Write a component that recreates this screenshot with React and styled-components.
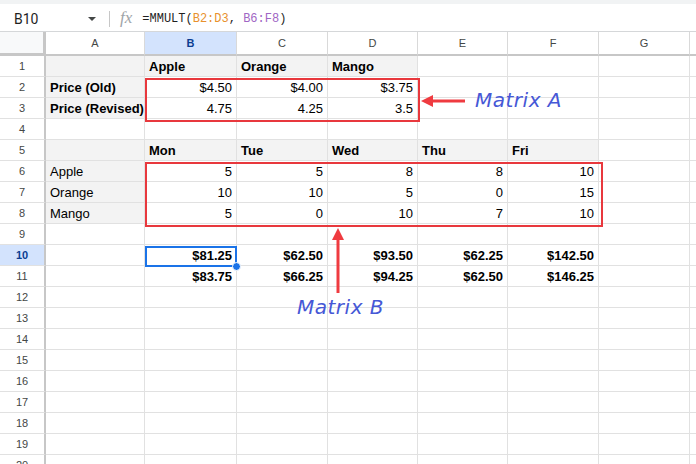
import React from 'react';
import styled, { createGlobalStyle } from 'styled-components';

const GlobalStyle = createGlobalStyle`
  html, body {
    margin: 0;
    padding: 0;
    background: #ffffff;
    font-family: 'Liberation Sans', Arial, sans-serif;
  }
`;

const Page = styled.div`
  position: relative;
  width: 696px;
  height: 464px;
  overflow: hidden;
  background: #ffffff;
`;

const TopStrip = styled.div`
  height: 4px;
  background: #f1f3f4;
`;

const FormulaBar = styled.div`
  display: flex;
  align-items: center;
  height: 28px;
  padding-top: 3px;
  box-sizing: border-box;
  border-bottom: 1px solid #d5d7d9;
  background: #ffffff;
`;

const NameBox = styled.div`
  width: 74px;
  padding-left: 14px;
  font-family: Roboto, 'Liberation Sans', sans-serif;
  font-size: 14px;
  color: #1f1f1f;
`;

const Caret = styled.span`
  width: 0;
  height: 0;
  border-left: 4px solid transparent;
  border-right: 4px solid transparent;
  border-top: 4px solid #444746;
  margin-right: 13px;
`;

const Divider = styled.span`
  width: 1px;
  height: 16px;
  background: #c7c7c7;
  margin-right: 10px;
`;

const Fx = styled.span`
  font-family: 'Liberation Serif', serif;
  font-style: italic;
  font-size: 17px;
  color: #a0a4a8;
  margin-right: 10px;
  margin-top: -2px;
`;

const Formula = styled.span`
  font-family: 'Liberation Mono', monospace;
  font-size: 12px;
  color: #1f1f1f;
`;

const Ref = styled.span`
  color: ${(p) => p.$color};
`;

const Grid = styled.div`
  display: grid;
  grid-template-columns: 46px 99px 92px 91px 90px 90px 91px 91px 1fr;
  grid-template-rows: 24px repeat(20, 21px);
`;

const Corner = styled.div`
  background: #f8f9fa;
  border-right: 3px solid #c7c7c7;
  border-bottom: 3px solid #c7c7c7;
`;

const ColHeader = styled.div`
  display: flex;
  align-items: center;
  justify-content: center;
  font-size: 11px;
  color: ${(p) => (p.$active ? '#0b3d91' : '#444746')};
  font-weight: ${(p) => (p.$active ? 700 : 400)};
  background: ${(p) => (p.$active ? '#d3e3fd' : '#ffffff')};
  border-right: 1px solid #d9d9d9;
  border-bottom: 2px solid #c7c7c7;
  box-sizing: border-box;
`;

const RowHeader = styled.div`
  display: flex;
  align-items: center;
  justify-content: center;
  font-size: 11px;
  color: ${(p) => (p.$active ? '#0b3d91' : '#444746')};
  font-weight: ${(p) => (p.$active ? 700 : 400)};
  background: ${(p) => (p.$active ? '#d3e3fd' : '#ffffff')};
  border-right: 2px solid #c7c7c7;
  border-bottom: 1px solid #e1e1e1;
  box-sizing: border-box;
`;

const Cell = styled.div`
  display: flex;
  align-items: center;
  justify-content: ${(p) => (p.$right ? 'flex-end' : 'flex-start')};
  padding: 1px 4px 0 4px;
  font-size: 13px;
  color: #000000;
  font-weight: ${(p) => (p.$bold ? 700 : 400)};
  background: ${(p) => (p.$shade ? '#f3f3f3' : '#ffffff')};
  border-right: 1px solid #e1e1e1;
  border-bottom: 1px solid #e1e1e1;
  box-sizing: border-box;
  white-space: nowrap;
  overflow: visible;
`;

const MatrixBox = styled.div`
  position: absolute;
  left: ${(p) => p.$x}px;
  top: ${(p) => p.$y}px;
  width: ${(p) => p.$w}px;
  height: ${(p) => p.$h}px;
  border: 2px solid #e8383d;
  box-sizing: border-box;
  pointer-events: none;
`;

const Selection = styled.div`
  position: absolute;
  left: 145px;
  top: 246px;
  width: 92px;
  height: 21px;
  border: 2px solid #1a73e8;
  box-sizing: border-box;
`;

const Handle = styled.span`
  position: absolute;
  right: -6px;
  bottom: -6px;
  width: 7px;
  height: 7px;
  border-radius: 50%;
  background: #1a73e8;
  border: 1px solid #ffffff;
`;

const Note = styled.div`
  position: absolute;
  left: ${(p) => p.$x}px;
  top: ${(p) => p.$y}px;
  font-family: 'DejaVu Sans', sans-serif;
  font-style: italic;
  font-weight: 300;
  font-size: 20px;
  letter-spacing: 0.5px;
  color: #4658d6;
  white-space: nowrap;
`;

const ArrowLayer = styled.svg`
  position: absolute;
  left: 0;
  top: 0;
  pointer-events: none;
`;

const columns = ['A', 'B', 'C', 'D', 'E', 'F', 'G', ''];

// value, bold, shaded per cell (A..G)
const rows = {
  1: { cells: ['', 'Apple', 'Orange', 'Mango'], bold: [1, 2, 3], shade: [0, 1, 2, 3] },
  2: { cells: ['Price (Old)', '$4.50', '$4.00', '$3.75'], bold: [0], shade: [0] },
  3: { cells: ['Price (Revised)', '4.75', '4.25', '3.5'], bold: [0], shade: [0] },
  5: { cells: ['', 'Mon', 'Tue', 'Wed', 'Thu', 'Fri'], bold: [1, 2, 3, 4, 5], shade: [0, 1, 2, 3, 4, 5] },
  6: { cells: ['Apple', '5', '5', '8', '8', '10'], bold: [], shade: [0] },
  7: { cells: ['Orange', '10', '10', '5', '0', '15'], bold: [], shade: [0] },
  8: { cells: ['Mango', '5', '0', '10', '7', '10'], bold: [], shade: [0] },
  10: { cells: ['', '$81.25', '$62.50', '$93.50', '$62.25', '$142.50'], bold: [1, 2, 3, 4, 5], shade: [] },
  11: { cells: ['', '$83.75', '$66.25', '$94.25', '$62.50', '$146.25'], bold: [1, 2, 3, 4, 5], shade: [] },
};

const isNumber = (v) => /^\$?\d+(\.\d+)?$/.test(v);

function SheetRow({ index }) {
  const row = rows[index] || { cells: [], bold: [], shade: [] };
  return (
    <>
      <RowHeader $active={index === 10}>{index}</RowHeader>
      {columns.map((c, i) => {
        const value = row.cells[i] || '';
        return (
          <Cell
            key={i}
            $bold={row.bold.includes(i)}
            $shade={row.shade.includes(i)}
            $right={isNumber(value)}
          >
            {value}
          </Cell>
        );
      })}
    </>
  );
}

export default function App() {
  const rowNumbers = Array.from({ length: 20 }, (_, i) => i + 1);
  return (
    <Page>
      <GlobalStyle />
      <TopStrip />
      <FormulaBar>
        <NameBox>B10</NameBox>
        <Caret />
        <Divider />
        <Fx>fx</Fx>
        <Formula>
          =MMULT(<Ref $color="#e8912d">B2:D3</Ref>, <Ref $color="#a066c4">B6:F8</Ref>)
        </Formula>
      </FormulaBar>
      <Grid>
        <Corner />
        {columns.map((c, i) => (
          <ColHeader key={i} $active={c === 'B'}>{c}</ColHeader>
        ))}
        {rowNumbers.map((n) => (
          <SheetRow key={n} index={n} />
        ))}
      </Grid>

      <MatrixBox $x={145} $y={78} $w={275} $h={44} />
      <MatrixBox $x={145} $y={162} $w={458} $h={65} />
      <Selection>
        <Handle />
      </Selection>

      <ArrowLayer width="696" height="464" viewBox="0 0 696 464">
        <line x1="431" y1="101" x2="465" y2="101" stroke="#ef3b40" strokeWidth="3" />
        <polygon points="421,101 433,95 433,107" fill="#ef3b40" />
        <line x1="338" y1="238" x2="338" y2="293" stroke="#ef3b40" strokeWidth="3" />
        <polygon points="338,228 332,240 344,240" fill="#ef3b40" />
      </ArrowLayer>
      <Note $x={475} $y={88}>Matrix A</Note>
      <Note $x={297} $y={295}>Matrix B</Note>
    </Page>
  );
}
